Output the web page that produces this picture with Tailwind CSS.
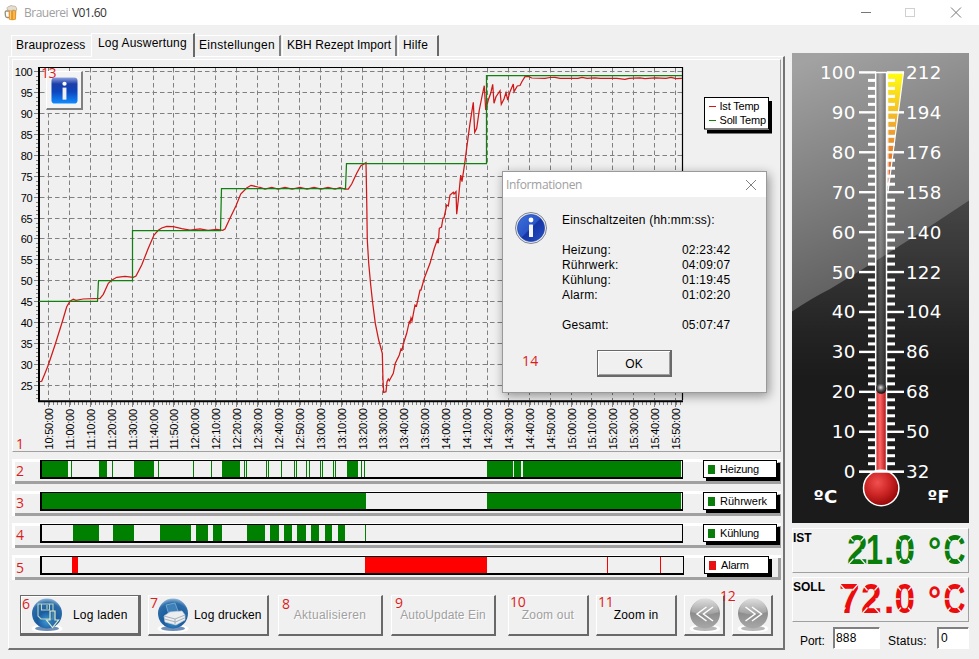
<!DOCTYPE html>
<html lang="de">
<head>
<meta charset="utf-8">
<title>Brauerei V01.60</title>
<script src="https://cdn.jsdelivr.net/npm/@tailwindcss/browser@4"></script>
</head>
<body class="bg-[#f0f0f0]">
<div class="relative flex h-[659px] w-[979px] flex-col overflow-hidden bg-[#f0f0f0] font-['Liberation_Sans',Arial,sans-serif] text-[12px] tracking-[0.2px] text-black">

  <!-- Title bar -->
  <header class="flex h-[25px] shrink-0 items-center bg-white pl-[4px] font-['Open_Sans',sans-serif] tracking-normal">
    <svg class="h-[16px] w-[14px]" viewBox="0 0 14 16">
      <path d="M5 6H2.5Q1 6 1.2 8l.3 3q.2 1.500 1.800 1.500H5" fill="none" stroke="#9a8a78" stroke-width="1.300"/>
      <path d="M4.500 4h8l-.6 10.500q-3.500 1.500-7 0z" fill="#e8962a"/>
      <path d="M6.500 6v8M10 6v8" stroke="#f9cf72" stroke-width="1.200"/>
      <path d="M3.500 5Q2 2 5 1.500 7-.3 9 1q3-.5 3.500 2 .8 2-1 2.500L9 5 7 6z" fill="#e5ddd0" stroke="#a79c8c" stroke-width=".6"/>
    </svg>
    <span class="ml-[6px] w-[48px] text-[12px] leading-[20px] tracking-[-0.5px] text-[#a0a0a0]">Brauerei</span>
    <span class="text-[12px] leading-[20px] tracking-[-0.6px] text-[#333]">V01.60</span>
    <svg class="ml-auto h-[25px] w-[120px]" viewBox="859 0 120 25" fill="none">
      <path d="M861 12.500h10" stroke="#777"/>
      <rect x="905.500" y="8.500" width="9" height="8" stroke="#d0d0d0"/>
      <path d="M951 7.500l10 10M961 7.500l-10 10" stroke="#777"/>
    </svg>
  </header>

  <div class="flex">
    <!-- Left: tabs and log page -->
    <div class="w-[785px] pl-[8px] pt-[8px]">
      <nav class="flex h-[23px] items-end pl-[3px] leading-[19px]">
        <div class="h-[21px] w-[80px] border-l border-t border-white pl-[4px]">Brauprozess</div>
        <div class="relative z-10 h-[24px] w-[104px] -mb-px border-l border-t border-r-2 border-l-white border-t-white border-r-[#696969] bg-[#f0f0f0] pl-[6px]">Log Auswertung</div>
        <div class="h-[21px] w-[86px] border-r-2 border-t border-r-[#808080] border-t-white pl-[4px] tracking-[0.3px]">Einstellungen</div>
        <div class="ml-px h-[21px] w-[115px] border-l border-r-2 border-t border-l-white border-r-[#808080] border-t-white pl-[4px] tracking-[0.05px]">KBH Rezept Import</div>
        <div class="ml-px h-[21px] w-[41px] border-l border-r-2 border-t border-l-white border-r-[#696969] border-t-white pl-[4px]">Hilfe</div>
      </nav>

      <main class="h-[594px] w-[777px] border-b-2 border-l border-r-2 border-t border-b-[#747474] border-l-white border-r-[#747474] border-t-white pl-[3px] pt-[2px]">
        <!-- Temperature chart -->
        <section class="h-[393px] w-[769px] border border-b-[#a0a0a0] border-l-white border-r-[#a0a0a0] border-t-white">
          <svg id="chart" class="block h-[391px] w-[767px]" viewBox="13 60 767 391" fill="none">
            <g id="grid" stroke="#808080" stroke-dasharray="4.500 3"></g>
            <g id="ticks" stroke="#808080" shape-rendering="crispEdges"></g>
            <path d="M38 67.500H682.500V400" stroke="#000" stroke-width="1.200"/>
            <path d="M39 67V401.300H683" stroke="#000" stroke-width="2"/>
            <polyline stroke="#d01818" stroke-width="1.250" points="39.700,381.700 41.700,381.300 44.300,375 48.300,365 55,345 62.300,321.700 66.700,306.700 70,301.300 73.300,299.300 76,300.300 83,299 100,298.300 103.300,294.300 108.300,283.300 111.700,280.300 116.700,277.300 125,276.300 133.300,277.300 136,276 141.700,265 148.300,248.300 154,235 158.300,230.300 161.700,228 166.700,226.300 173.300,226.700 181.700,228.700 190,230 200,229 208,230.300 216.700,229.300 222.700,230.300 225,229 230,218.300 236,205.700 240.700,194 246.700,188 251,185.300 258,187 260,187.300 265,189 271.700,187.300 278,189 285,187.500 292,189 300,187.300 307,189 314,187.300 321,189 328,187.300 335,189 340,187.700 345,189 348.300,189 351.700,184 356.700,173.300 360.700,166 366,162.700 366.700,200 367.300,240 368.700,263.300 370.700,285 372.700,303.300 375.300,323.300 378.700,340 382.300,353.300 383,380 383.700,392.500 386,391.700 387,381.700 388.300,379 389.300,380.700 393.300,373.300 395.300,363.300 399.300,355 401,349 402,350 403.300,344 406.700,333.300 409.300,321.700 410,323 411,318 412,321 415,305 416.500,306 420,290 421,290 424.300,278.300 430,263.300 434.300,248.300 437.300,240 438.300,243.300 439.300,228.300 441.500,227 443,218 444,218 446.700,205 448.300,206 450,195 453.300,192.300 454,194 456,191.700 456.700,214.300 458.300,200 460.700,175 462,181.700 464.700,163.300 467.300,143.300 470,123.300 473.300,102.300 474.700,132.300 476.700,128.300 479.300,110 482.300,95 484.300,85.700 485.700,110 488.300,100 490.700,93.300 492.700,84.300 494,103.300 496,96.700 500,90.700 501.300,104.300 504,99 506,92.700 507.700,100 510,91.700 513.300,84 514,91.700 517.300,86 520,85.500 522,81.500 525,76.700 528.300,76.500 531.700,78 545,78.300 550,77.500 555,77.300 560,78.300 578,78.300 582,77.300 587,78.300 595,77.800 600,78.300 617,78.300 625,79.300 629,78.300 640,77.800 645,78.700 655,77.800 666,78.300 671,77.500 676,78.500 682,78.300"/>
            <polyline stroke="#118011" stroke-width="1.250" points="39,301.300 97.500,301.300 98.500,280.500 132.500,280.500 132.500,230.500 220.500,230.500 221.500,188.500 345.500,188.500 346.500,163.500 486.500,163.500 486.500,75.500 682,75.500"/>
            <g id="labels" fill="#000" font-size="11" letter-spacing="-0.200" font-family="Liberation Sans, Arial, sans-serif"></g>
            <path d="M707 130V133.500H772V101h-3V130z" fill="#000"/>
            <rect x="704.500" y="97.500" width="64" height="31.500" fill="#fff" stroke="#000"/>
            <path d="M709 106.500h7" stroke="#d01818"/><path d="M709 120.500h7" stroke="#118011"/>
            <g fill="#000" font-size="11" letter-spacing="-0.200" font-family="Liberation Sans, Arial, sans-serif">
              <text x="719.500" y="110">Ist Temp</text><text x="719.500" y="124">Soll Temp</text>
            </g>
          </svg>
        </section>

        <!-- Switching state timelines -->
        <section class="mt-[7px] flex flex-col gap-[7px] text-[11px] leading-[13px] tracking-[-0.2px]">
          <div class="flex h-[25px] w-[769px] items-start pt-px shadow-[inset_3px_3px_0_#fff,inset_-3px_-3px_0_#a0a0a0]">
            <span class="w-[28px] pl-[4px] pt-[2px] font-['Open_Sans',sans-serif] text-[14px] leading-[18px] text-[#dc1c1c]">2</span>
            <svg data-row="heizung" class="h-[19px] w-[643px] border-b-2 border-l-2 border-r border-t border-black bg-[#f0f0f0]" viewBox="42 0 640 16" preserveAspectRatio="none" fill="#008000"></svg>
            <div class="ml-[20px] flex h-[18px] w-[74px] items-center border border-black bg-white pl-[4px] shadow-[4px_4px_0_-1px_#000,3px_3px_0_#000]"><i class="mr-[5px] h-[9px] w-[7px] bg-[#0a7d0a]"></i>Heizung</div>
          </div>
          <div class="flex h-[25px] w-[769px] items-start pt-px shadow-[inset_3px_3px_0_#fff,inset_-3px_-3px_0_#a0a0a0]">
            <span class="w-[28px] pl-[4px] pt-[2px] font-['Open_Sans',sans-serif] text-[14px] leading-[18px] text-[#dc1c1c]">3</span>
            <svg data-row="ruehrwerk" class="h-[19px] w-[643px] border-b-2 border-l-2 border-r border-t border-black bg-[#f0f0f0]" viewBox="42 0 640 16" preserveAspectRatio="none" fill="#008000"></svg>
            <div class="ml-[20px] flex h-[18px] w-[74px] items-center border border-black bg-white pl-[4px] tracking-normal shadow-[3px_3px_0_#000]"><i class="mr-[5px] h-[9px] w-[7px] bg-[#0a7d0a]"></i>Rührwerk</div>
          </div>
          <div class="flex h-[25px] w-[769px] items-start pt-px shadow-[inset_3px_3px_0_#fff,inset_-3px_-3px_0_#a0a0a0]">
            <span class="w-[28px] pl-[4px] pt-[2px] font-['Open_Sans',sans-serif] text-[14px] leading-[18px] text-[#dc1c1c]">4</span>
            <svg data-row="kuehlung" class="h-[19px] w-[643px] border-b-2 border-l-2 border-r border-t border-black bg-[#f0f0f0]" viewBox="42 0 640 16" preserveAspectRatio="none" fill="#008000"></svg>
            <div class="ml-[20px] flex h-[18px] w-[74px] items-center border border-black bg-white pl-[4px] shadow-[3px_3px_0_#000]"><i class="mr-[5px] h-[9px] w-[7px] bg-[#0a7d0a]"></i>Kühlung</div>
          </div>
          <div class="flex h-[25px] w-[769px] items-start pt-px shadow-[inset_3px_3px_0_#fff,inset_-3px_-3px_0_#a0a0a0]">
            <span class="w-[28px] pl-[4px] pt-[3px] font-['Open_Sans',sans-serif] text-[14px] leading-[18px] text-[#dc1c1c]">5</span>
            <svg data-row="alarm" class="h-[19px] w-[644px] border-b-2 border-l-2 border-r border-t border-black bg-[#f0f0f0]" viewBox="42 0 641 16" preserveAspectRatio="none" fill="#f00"></svg>
            <div class="ml-[20px] flex h-[18px] w-[65px] items-center border border-black bg-white pl-[4px] shadow-[3px_3px_0_#000]"><i class="mr-[5px] h-[9px] w-[7px] bg-[#e81010]"></i>Alarm</div>
          </div>
        </section>

        <!-- Command buttons -->
        <section class="mt-[15px] flex h-[41px] pl-[8px] leading-[14px]">
          <button class="flex w-[121px] items-center border border-b-[3px] border-r-[3px] border-[#696969] pl-[9px] shadow-[inset_1px_1px_0_#fff]">
            <svg class="mr-[9px] h-[36px] w-[34px]" viewBox="0 0 34 36"><use href="#blueball"/>
              <path d="M8 7h15v15H11l-3-3zM11.500 7v6h8V7M17 8v4" fill="none" stroke="#bcd6c4" stroke-width="1.100"/>
              <path d="M20 14h5v9h3.500l-6 7.500-6-7.500H20z" fill="#2f72ad" fill-opacity=".7" stroke="#dcebc9" stroke-width="1.200"/></svg>
            Log laden</button>
          <button class="ml-[7px] flex w-[121px] items-center border border-b-2 border-r-2 border-b-[#696969] border-l-white border-r-[#696969] border-t-white pl-[7px] tracking-[0.15px]">
            <svg class="mr-[4px] h-[36px] w-[34px]" viewBox="0 0 34 36"><use href="#blueball"/>
              <path d="M10 8l9-2 3 8-9 4z" fill="#3e80b8" stroke="#7fb0d8" stroke-width=".8"/>
              <path d="M8 19l6-4 12-1 3 4v5l-9 5-11-3z" fill="#eceeef" stroke="#c4ccd4" stroke-width=".7"/>
              <path d="M8 19l11 3 10-4M8.500 22l11 3 9-4M19 22v5" fill="none" stroke="#96a2ae" stroke-width=".8"/></svg>
            Log drucken</button>
          <button class="ml-[9px] w-[105px] border border-b-2 border-r-2 border-b-[#696969] border-l-white border-r-[#696969] border-t-white text-[#a0a0a0] [text-shadow:1px_1px_0_#fff] tracking-[0.3px]">Aktualisieren</button>
          <button class="ml-[8px] w-[105px] border border-b-2 border-r-2 border-b-[#696969] border-l-white border-r-[#696969] border-t-white text-[#a0a0a0] [text-shadow:1px_1px_0_#fff] tracking-[0.1px]">AutoUpdate Ein</button>
          <button class="ml-[12px] w-[81px] border border-b-2 border-r-2 border-b-[#696969] border-l-white border-r-[#696969] border-t-white text-[#a0a0a0] [text-shadow:1px_1px_0_#fff]">Zoom out</button>
          <button class="ml-[7px] w-[81px] border border-b-2 border-r-2 border-b-[#696969] border-l-white border-r-[#696969] border-t-white">Zoom in</button>
          <button class="ml-[7px] flex w-[41px] items-center border border-b-2 border-r-2 border-b-[#696969] border-l-white border-r-[#696969] border-t-white pl-[3px]">
            <svg class="h-[36px] w-[34px]" viewBox="0 0 34 36"><use href="#grayball"/><path d="M18.500 10l-9.500 7 9.500 7M25 10l-9.500 7 9.500 7" fill="none" stroke="#fff" stroke-width="1.500"/></svg></button>
          <button class="ml-[7px] flex w-[41px] items-center border border-b-2 border-r-2 border-b-[#696969] border-l-white border-r-[#696969] border-t-white pl-[3px]">
            <svg class="h-[36px] w-[34px]" viewBox="0 0 34 36"><use href="#grayball"/><path d="M9.500 10l9.500 7-9.500 7M16 10l9.500 7-9.500 7" fill="none" stroke="#fff" stroke-width="1.500"/></svg></button>
        </section>
      </main>
    </div>

    <!-- Right: thermometer and readouts -->
    <aside class="w-[194px] pl-[7px] pt-[28px]">
      <svg id="thermo" class="block h-[470px] w-[177px]" viewBox="792 53 177 470">
        <defs>
          <linearGradient id="bgl" x1=".2" y1="0" x2=".35" y2="1"><stop offset="0" stop-color="#a2a2a2"/><stop offset=".3" stop-color="#7c7c7c"/><stop offset=".58" stop-color="#585858"/></linearGradient>
          <linearGradient id="bgd" x1="0" y1="0" x2="0" y2="1"><stop offset="0" stop-color="#464646"/><stop offset=".4" stop-color="#242424"/><stop offset=".55" stop-color="#1b1b1b"/><stop offset="1" stop-color="#1b1b1b"/></linearGradient>
          <linearGradient id="heat" x1="0" y1="0" x2="0" y2="1"><stop offset="0" stop-color="#ffff10"/><stop offset=".45" stop-color="#f0a830"/><stop offset="1" stop-color="#d84820"/></linearGradient>
          <linearGradient id="tube" x1="0" y1="0" x2="1" y2="0"><stop offset="0" stop-color="#000" stop-opacity=".15"/><stop offset=".4" stop-color="#fff" stop-opacity=".18"/><stop offset="1" stop-color="#000" stop-opacity=".35"/></linearGradient>
          <linearGradient id="fluid" x1="0" y1="0" x2="1" y2="0"><stop offset="0" stop-color="#c83030"/><stop offset=".4" stop-color="#ff6868"/><stop offset="1" stop-color="#b01818"/></linearGradient>
          <radialGradient id="bulb" cx=".4" cy=".35" r=".65"><stop offset="0" stop-color="#f05050"/><stop offset=".5" stop-color="#d02828"/><stop offset="1" stop-color="#980808"/></radialGradient>
          <radialGradient id="bead" cx=".45" cy=".4" r=".6"><stop offset="0" stop-color="#ddd"/><stop offset=".5" stop-color="#555"/><stop offset="1" stop-color="#0c0c0c"/></radialGradient>
        </defs>
        <rect x="792" y="53" width="177" height="470" fill="url(#bgl)"/>
        <path d="M792 311.500Q812 298 830 289 900 247 969 200.500V523H792z" fill="url(#bgd)"/>
        <path d="M887.500 72.500H903.500L888 192z" fill="url(#heat)" stroke="#fff" stroke-width="1.200"/>
        <g id="scale" fill="#fff"></g>
        <rect x="875.500" y="72" width="11.500" height="400" fill="url(#tube)"/>
        <rect x="876" y="391" width="10" height="84" fill="url(#fluid)"/>
        <path d="M875.700 72V472M886.500 72V472M875 72.500h12" stroke="#fff" stroke-width="1.500"/>
        <circle cx="881.200" cy="488" r="17.700" fill="url(#bulb)" stroke="#fff" stroke-width="1.500"/>
        <path d="M859 471.800h45" stroke="#fff" stroke-width="2"/>
        <circle cx="881.200" cy="388.500" r="5.200" fill="url(#bead)"/>
        <g id="temps" fill="#fff" font-family="DejaVu Sans, Verdana, sans-serif" font-size="18.300"></g>
        <g fill="#fff" font-family="DejaVu Sans, Verdana, sans-serif" font-weight="bold" font-size="17">
          <text x="813.500" y="503" textLength="24" lengthAdjust="spacingAndGlyphs">ºC</text>
          <text x="927.500" y="503" textLength="22" lengthAdjust="spacingAndGlyphs">ºF</text>
        </g>
      </svg>

      <div class="mt-[5px] flex h-[45px] w-[177px] justify-between border border-b-[#a0a0a0] border-l-white border-r-[#a0a0a0] border-t-white text-[12px] font-bold leading-[18px] tracking-normal">
        <span>IST</span>
        <svg class="h-[43px] w-[130px] overflow-visible" viewBox="838 529 130 43" font-family="Liberation Sans, Arial, sans-serif" font-weight="bold" font-size="37" fill="#0a7d0a">
          <g transform="translate(0 564) scale(1 1.130)">
            <text y="0" x="847">2</text><text y="0" x="866" textLength="17" lengthAdjust="spacingAndGlyphs">1</text><text y="0" x="884">.</text><text y="0" x="894.500">0</text>
            <text x="928" y="-1" font-size="33">°</text>
            <text x="943.500" y="0" textLength="22" lengthAdjust="spacingAndGlyphs">C</text>
          </g>
          <g stroke="#f0f0f0" stroke-width="1.300" data-x="847.500 895 944.500" data-y="535.500"></g>
        </svg>
      </div>
      <div class="mt-[4px] flex h-[45px] w-[177px] justify-between border border-b-[#a0a0a0] border-l-white border-r-[#a0a0a0] border-t-white text-[12px] font-bold leading-[18px] tracking-normal">
        <span>SOLL</span>
        <svg class="h-[43px] w-[130px] overflow-visible" viewBox="838 578 130 43" font-family="Liberation Sans, Arial, sans-serif" font-weight="bold" font-size="37" fill="#ec0c0c">
          <g transform="translate(0 613) scale(1 1.130)">
            <text y="0" x="839">7</text><text y="0" x="861">2</text><text y="0" x="884">.</text><text y="0" x="894.500">0</text>
            <text x="928" y="-1" font-size="33">°</text>
            <text x="943.500" y="0" textLength="22" lengthAdjust="spacingAndGlyphs">C</text>
          </g>
          <g stroke="#f0f0f0" stroke-width="1.300" data-x="839.500 861.500 895 944.500" data-y="584.500"></g>
        </svg>
      </div>
      <div class="mt-[5px] flex h-[22px] w-[177px] leading-[16px]">
        <span class="w-[41px] pl-[8px] pt-[6px] tracking-[-0.1px]">Port:</span>
        <span class="w-[47px] border border-b-white border-l-[#808080] border-r-white border-t-[#808080] bg-white pl-[2px] pt-[2px] shadow-[inset_1px_1px_0_#808080]">888</span>
        <span class="w-[57px] pl-[8px] pt-[6px]">Status:</span>
        <span class="w-[32px] border border-b-white border-l-[#808080] border-r-white border-t-[#808080] bg-white pl-[3px] pt-[2px] shadow-[inset_1px_1px_0_#808080]">0</span>
      </div>
    </aside>
  </div>

  <!-- Info button over the chart -->
  <button class="absolute left-[46px] top-[71px] flex h-[39px] w-[37px] items-center justify-center border border-b-2 border-r-2 border-b-[#808080] border-l-white border-r-[#808080] border-t-white bg-[#f4f4f4]">
    <svg class="mt-px h-[27px] w-[27px]" viewBox="0 0 28 28">
      <defs><linearGradient id="sq" x1="0" y1="0" x2="0" y2="1"><stop offset="0" stop-color="#8ea2e0"/><stop offset=".25" stop-color="#1c3fa8"/><stop offset=".55" stop-color="#0d45bd"/><stop offset="1" stop-color="#118cff"/></linearGradient></defs>
      <rect x=".5" y=".5" width="27" height="27" rx="3.500" fill="url(#sq)"/>
      <circle cx="14" cy="7" r="2.200" fill="#fff"/><rect x="12" y="11" width="4" height="12.500" fill="#f0f0f4"/></svg>
  </button>

  <!-- Reference numbers -->
  <div class="font-['Open_Sans',sans-serif] text-[14px] leading-[18px] tracking-[-0.2px] text-[#dc1c1c]">
    <span class="absolute left-[41px] top-[64px] tracking-[-0.6px]">13</span>
    <span class="absolute left-[16px] top-[435px]">1</span>
    <span class="absolute left-[22px] top-[595px]">6</span>
    <span class="absolute left-[150px] top-[594px]">7</span>
    <span class="absolute left-[282px] top-[595px]">8</span>
    <span class="absolute left-[395px] top-[594px]">9</span>
    <span class="absolute left-[510px] top-[593px]">10</span>
    <span class="absolute left-[598px] top-[593px]">11</span>
    <span class="absolute left-[720px] top-[587px]">12</span>
  </div>

  <!-- Informationen dialog -->
  <div class="absolute left-[502px] top-[171px] flex h-[222px] w-[265px] flex-col border border-[#9a9a9a] bg-[#f0f0f0] shadow-[2px_3px_10px_rgba(0,0,0,0.4)]">
    <div class="flex h-[25px] items-center justify-between bg-white pl-[3px] pr-[9px] font-['Open_Sans',sans-serif] text-[12px] leading-[20px] tracking-[-0.35px] text-[#a0a0a0]">
      <span>Informationen</span>
      <svg class="h-[12px] w-[12px]" viewBox="0 0 12 12"><path d="M1 1l10 10M11 1L1 11" stroke="#808080"/></svg>
    </div>
    <div class="flex pl-[11px] pt-[14px]">
      <svg class="h-[34px] w-[34px]" viewBox="0 0 34 34">
        <defs><linearGradient id="rd" x1="0" y1="0" x2="1" y2="1"><stop offset="0" stop-color="#3d72dc"/><stop offset=".48" stop-color="#2a56c8"/><stop offset=".52" stop-color="#1535a4"/><stop offset="1" stop-color="#2450c8"/></linearGradient></defs>
        <circle cx="17" cy="17" r="15.500" fill="#e8eaf2" stroke="#7c8494"/><circle cx="17" cy="17" r="13.600" fill="url(#rd)" stroke="#20409c" stroke-width=".6"/>
        <circle cx="17" cy="9" r="2.400" fill="#fff"/><rect x="15" y="13.500" width="4" height="12.500" rx=".6" fill="#f4f4fa"/></svg>
      <div class="ml-[14px] grid w-[172px] grid-cols-[120px_1fr] pt-[2px] leading-[15px]">
        <span class="col-span-2 mb-[15px]">Einschaltzeiten (hh:mm:ss):</span>
        <span>Heizung:</span><span>02:23:42</span>
        <span>Rührwerk:</span><span>04:09:07</span>
        <span>Kühlung:</span><span>01:19:45</span>
        <span>Alarm:</span><span>01:02:20</span>
        <span class="mt-[15px]">Gesamt:</span><span class="mt-[15px]">05:07:47</span>
      </div>
    </div>
    <div class="mt-[17px] flex pl-[19px]">
      <span class="w-[75px] pt-px font-['Open_Sans',sans-serif] text-[14px] leading-[20px] text-[#dc1c1c]">14</span>
      <button class="h-[27px] w-[75px] border border-b-2 border-r-2 border-[#696969] pt-px shadow-[inset_1px_1px_0_#fff,inset_-1px_-1px_0_#a0a0a0]">OK</button>
    </div>
  </div>

  <!-- Shared button spheres -->
  <svg class="absolute h-0 w-0">
    <defs>
      <radialGradient id="bb" cx=".5" cy=".75" r=".8"><stop offset="0" stop-color="#3f9ad8"/><stop offset=".4" stop-color="#1a5c9e"/><stop offset=".75" stop-color="#2c6ca8"/><stop offset="1" stop-color="#b4d2ea"/></radialGradient>
      <linearGradient id="gb" x1="0" y1="0" x2="0" y2="1"><stop offset="0" stop-color="#d8d8d8"/><stop offset=".5" stop-color="#8e8e8e"/><stop offset="1" stop-color="#a8a8a8"/></linearGradient>
      <g id="blueball"><ellipse cx="17" cy="31.500" rx="15.500" ry="4.300" fill="#fff"/><ellipse cx="17" cy="31.500" rx="12" ry="2.500" fill="#6f8fb8"/><circle cx="17" cy="16.500" r="15" fill="url(#bb)"/></g>
      <g id="grayball"><ellipse cx="17" cy="31.500" rx="15.500" ry="4.300" fill="#fff"/><ellipse cx="17" cy="31.500" rx="12" ry="2.500" fill="#b8b8b8"/><circle cx="17" cy="16.500" r="15" fill="url(#gb)"/><path d="M3.500 15a13.500 13.500 0 0 1 27 0q-13 5-27 0z" fill="#fff" opacity=".18"/></g>
    </defs>
  </svg>
</div>

<script>
  // Chart grid, ticks and axis labels
  let grid = '', ticks = '', labels = '';
  for (let i = 0; i <= 15; i++) {
    const y = Math.round(71 + i * 20.93) + .5;
    grid += `<path d="M40 ${y}H682"/>`;
    ticks += `<path d="M34 ${y}h4"/>`;
    labels += `<text x="32.500" y="${y + 4}" text-anchor="end">${100 - i * 5}</text>`;
    for (let k = 1; k < 5; k++) { const m = Math.round(y + k * 4.19) + .5; if (m < 400) ticks += `<path d="M36 ${m}h2"/>`; }
  }
  for (let i = 0; i <= 30; i++) {
    const x = Math.round(48 + i * 20.9) + .5, t = 650 + i * 10;
    grid += `<path d="M${x} 68V400"/>`;
    ticks += `<path d="M${x} 402v5"/>`;
    const s = Math.floor(t / 60) + ':' + String(t % 60).padStart(2, '0') + ':00';
    labels += `<text transform="translate(${x + 4} 449.500) rotate(-90)">${s}</text>`;
    for (let k = -1; k < 4; k++) { const m = Math.round(x + k * 4.18) + .5; if (m < 683) ticks += `<path d="M${m} 402v3"/>`; }
  }
  document.getElementById('grid').innerHTML = grid;
  document.getElementById('ticks').innerHTML = ticks;
  document.getElementById('labels').innerHTML = labels;

  // On/off intervals per actuator: [start, end]
  const rows = {
    heizung: [[42,68],[71,72],[99,107],[112,113],[134,154],[158,159],[193,194],[211,212],[222,240],[244,245],[246,247],[266,267],[268,269],[281,282],[294,295],[296,297],[306,307],[309,310],[320,321],[322,323],[333,334],[335,336],[347,358],[361,362],[364,365],[487,513],[514,521],[523,681]],
    ruehrwerk: [[42,366],[487,681]],
    kuehlung: [[73,99],[113,134],[160,191],[196,208],[213,222],[247,265],[270,279],[284,292],[297,306],[311,319],[325,332],[338,345],[365,366]],
    alarm: [[72,78],[365,487],[607,608],[660,661]]
  };
  for (const k in rows)
    document.querySelector(`[data-row=${k}]`).innerHTML = rows[k].map(([a, b]) => `<rect x="${a}" y="0" width="${b - a}" height="16"/>`).join('');

  // Gaps between the display segments
  document.querySelectorAll('[data-x]').forEach(g => {
    const y = +g.dataset.y;
    g.innerHTML = g.dataset.x.split(' ').map(Number).map(x =>
      `<path d="M${x - 1} ${y - 2}l7 8M${x + 20} ${y - 2}l-7 8M${x - 1} ${y + 31}l7-8M${x + 20} ${y + 31}l-7-8M${x - 1} ${y + 14.500}h6M${x + 14} ${y + 14.500}h6"/>`).join('');
  });

  // Thermometer scale
  let scale = '', temps = '';
  for (let c = 0; c <= 100; c += 2) {
    const y = 471.700 - c * 3.993, major = c % 10 === 0, w = major ? 17 : 8, h = major ? 2.400 : 3;
    scale += `<rect x="${876 - w}" y="${y - h / 2}" width="${w}" height="${h}"/><rect x="887" y="${y - h / 2}" width="${w}" height="${h}"/>`;
    if (major) temps += `<text x="855.500" y="${y + 6.500}" text-anchor="end">${c}</text><text x="906" y="${y + 6.500}">${c * 1.8 + 32}</text>`;
  }
  document.getElementById('scale').innerHTML = scale;
  document.getElementById('temps').innerHTML = temps;
</script>
</body>
</html>
